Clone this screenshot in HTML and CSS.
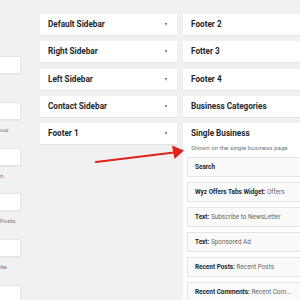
FILE: index.html
```html
<!DOCTYPE html>
<html lang="en">
<head>
    <meta charset="UTF-8">
    <title>Widgets</title>
    <link rel="stylesheet" href="styles.css">
</head>
<body>
    <div class="widgets">
        <div class="available">
            <div class="widget-item">
                <div class="widget-stub"></div>
                <p class="widget-desc"></p>
            </div>
            <div class="widget-item">
                <div class="widget-stub"></div>
                <p class="widget-desc">our</p>
            </div>
            <div class="widget-item">
                <div class="widget-stub"></div>
                <p class="widget-desc">n.</p>
            </div>
            <div class="widget-item">
                <div class="widget-stub"></div>
                <p class="widget-desc">Posts.</p>
            </div>
            <div class="widget-item">
                <div class="widget-stub"></div>
                <p class="widget-desc">ite.</p>
            </div>
            <div class="widget-item">
                <div class="widget-stub"></div>
            </div>
        </div>

        <div class="sidebars">
            <div class="sidebar"><span>Default Sidebar</span><i class="toggle"></i></div>
            <div class="sidebar"><span>Right Sidebar</span><i class="toggle"></i></div>
            <div class="sidebar"><span>Left Sidebar</span><i class="toggle"></i></div>
            <div class="sidebar"><span>Contact Sidebar</span><i class="toggle"></i></div>
            <div class="sidebar"><span>Footer 1</span><i class="toggle"></i></div>
        </div>

        <div class="sidebars sidebars-right">
            <div class="sidebar"><span>Footer 2</span></div>
            <div class="sidebar"><span>Fotter 3</span></div>
            <div class="sidebar"><span>Footer 4</span></div>
            <div class="sidebar"><span>Business Categories</span></div>
            <div class="sidebar sidebar-open">
                <div class="sidebar-title">Single Business</div>
                <p class="sidebar-desc">Shown on the single business page</p>
                <div class="widget-top"><b>Search</b></div>
                <div class="widget-top"><b>Wyz Offers Tabs Widget:</b> Offers</div>
                <div class="widget-top"><b>Text:</b> Subscribe to NewsLetter</div>
                <div class="widget-top"><b>Text:</b> Sponsored Ad</div>
                <div class="widget-top"><b>Recent Posts:</b> Recent Posts</div>
                <div class="widget-top"><b>Recent Comments:</b> Recent Com...</div>
            </div>
        </div>
    </div>

    <!-- red annotation arrow -->
    <svg class="arrow" width="300" height="300" viewBox="0 0 300 300">
        <line x1="96" y1="162" x2="174" y2="152.5" stroke="#e2231a" stroke-width="2.2" stroke-linecap="round"/>
        <polygon points="184,150.5 172,145.5 174.5,159" fill="#e2231a"/>
    </svg>
</body>
</html>
```

FILE: styles.css
```css
body {
    margin: 0;
    padding: 0;
    width: 300px;
    height: 300px;
    overflow: hidden;
    background: #f1f1f1;
    font-family: Roboto, "Liberation Sans", sans-serif;
    color: #23282d;
}

.widgets {
    display: flex;
    align-items: flex-start;
}

/* available widgets, cut off on the left */
.available {
    width: 21px;
    margin-right: 19px;
    padding-top: 56px;
    flex-shrink: 0;
}

.widget-item {
    margin-bottom: 12.8px;
}

.widget-stub {
    height: 16px;
    background: #fff;
    border: 1px solid #e5e5e5;
    border-left: none;
    box-shadow: 0 1px 1px rgba(0,0,0,0.04);
}

.widget-desc {
    margin: 5px 0 0;
    height: 10px;
    line-height: 10px;
    font-size: 6px;
    color: #72777c;
    white-space: nowrap;
}

/* sidebars */
.sidebars {
    width: 137px;
    padding-top: 14px;
    flex-shrink: 0;
}

.sidebars-right {
    margin-left: 6px;
    width: 140px;
}

.sidebar {
    height: 21px;
    margin-bottom: 6.25px;
    padding: 0 8px;
    background: #fff;
    box-shadow: 0 1px 1px rgba(0,0,0,0.05);
    font-size: 8.2px;
    font-weight: bold;
    line-height: 21px;
    display: flex;
    justify-content: space-between;
    align-items: center;
}

.toggle {
    width: 0;
    height: 0;
    margin-right: 2px;
    border-left: 1.5px solid transparent;
    border-right: 1.5px solid transparent;
    border-top: 3px solid #555d66;
}

.sidebar-open {
    display: block;
    height: 200px;
    padding: 0 0 0 4px;
}

.sidebar-title {
    line-height: 21px;
    height: 21px;
    padding-left: 4px;
}

.sidebar-desc {
    margin: 0 0 5px;
    padding-left: 4px;
    height: 8px;
    line-height: 8px;
    font-size: 6.2px;
    font-weight: normal;
    color: #72777c;
    white-space: nowrap;
}

.widget-top {
    height: 18px;
    margin-bottom: 5px;
    padding: 0 7px;
    background: #fafafa;
    border: 1px solid #e5e5e5;
    border-right: none;
    font-size: 6.4px;
    font-weight: normal;
    line-height: 18px;
    color: #666;
    white-space: nowrap;
}

.widget-top b {
    color: #23282d;
}

.arrow {
    position: absolute;
    left: 0;
    top: 0;
    pointer-events: none;
}
```
